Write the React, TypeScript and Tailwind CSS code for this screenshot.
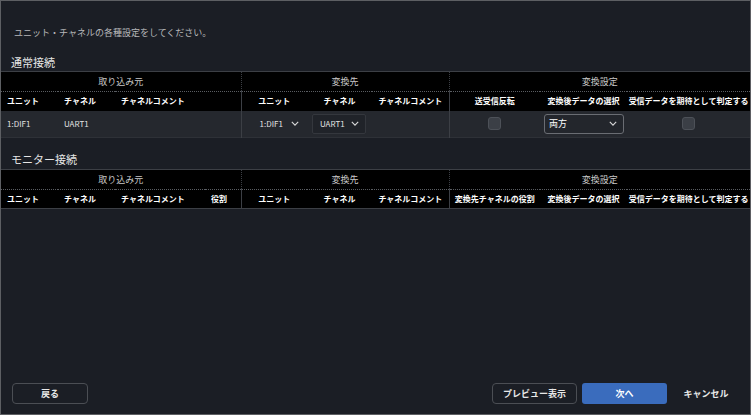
import React from "react";

const font = "font-['Noto_Sans_CJK_JP','Noto_Sans',sans-serif]";
const sep = "border-r border-[#3c3f45]";
const groupTh =
  "h-[20px] text-[9px] font-normal text-[#c9c9c9] text-center border-b border-dotted border-b-[#5a5d62]";
const colTh = "h-[19px] text-[8px] font-bold text-white whitespace-nowrap";

function Chevron({ className = "" }: { className?: string }) {
  return (
    <svg
      viewBox="0 0 10 6"
      className={"w-[8px] h-[5px] " + className}
      fill="none"
      stroke="#d8d8d8"
      strokeWidth="1.4"
    >
      <polyline points="1,1 5,5 9,1" />
    </svg>
  );
}

function Checkbox() {
  return (
    <span className="inline-block w-[13px] h-[13px] rounded-[3px] bg-[#3b3f46] border border-[#4d5158] align-middle" />
  );
}

function InlineSelect({ value, boxed }: { value: string; boxed?: boolean }) {
  return (
    <div
      className={
        "w-[54px] h-[20px] flex items-center justify-between pl-[7px] pr-[6px] rounded-[2px] " +
        (boxed ? "border border-[#34373d] bg-[#202329]" : "border border-transparent")
      }
    >
      <span className="text-[8px] text-[#e2e2e2]">{value}</span>
      <Chevron />
    </div>
  );
}

export default function App() {
  return (
    <div
      className={`${font} w-[751px] h-[415px] bg-[#1b1e25] border border-[#5d5f63] flex flex-col text-white overflow-hidden`}
    >
      <p className="mt-[25px] ml-[13px] text-[9px] leading-[13px] text-[#b7b8ba]">
        ユニット・チャネルの各種設定をしてください。
      </p>
      <h2 className="mt-[16px] ml-[10px] text-[11px] leading-[15px] text-[#e6e6e6]">
        通常接続
      </h2>

      <table className="mt-[1px] w-full table-fixed border-collapse">
        <colgroup>
          <col className="w-[57px]" />
          <col className="w-[57px]" />
          <col className="w-[126px]" />
          <col className="w-[66px]" />
          <col className="w-[65px]" />
          <col className="w-[77px]" />
          <col className="w-[91px]" />
          <col className="w-[87px]" />
          <col />
        </colgroup>
        <thead className="bg-black border-t border-[#3c3f45]">
          <tr>
            <th colSpan={3} className={`${groupTh} ${sep}`}>取り込み元</th>
            <th colSpan={3} className={`${groupTh} ${sep}`}>変換先</th>
            <th colSpan={3} className={groupTh}>変換設定</th>
          </tr>
          <tr>
            <th className={`${colTh} text-left pl-[6px]`}>ユニット</th>
            <th className={`${colTh} text-left pl-[6px]`}>チャネル</th>
            <th className={`${colTh} text-left pl-[6px] ${sep}`}>チャネルコメント</th>
            <th className={colTh}>ユニット</th>
            <th className={colTh}>チャネル</th>
            <th className={`${colTh} ${sep}`}>チャネルコメント</th>
            <th className={colTh}>送受信反転</th>
            <th className={colTh}>変換後データの選択</th>
            <th className={colTh}>受信データを期待として判定する</th>
          </tr>
        </thead>
        <tbody>
          <tr className="h-[27px] bg-[#25282e] border-b border-[#2e3137] text-[8px] text-[#e2e2e2]">
            <td className="pl-[6px]">1:DIF1</td>
            <td className="pl-[6px]">UART1</td>
            <td className={sep}></td>
            <td className="pl-[10px]">
              <InlineSelect value="1:DIF1" />
            </td>
            <td className="pl-[5px]">
              <InlineSelect value="UART1" boxed />
            </td>
            <td className={sep}></td>
            <td className="text-center">
              <Checkbox />
            </td>
            <td className="pl-[4px]">
              <div className="w-[80px] h-[20px] flex items-center justify-between pl-[4px] pr-[6px] rounded-[3px] border border-[#6a6d73] bg-[#23262c]">
                <span className="text-[9px] text-white">両方</span>
                <Chevron />
              </div>
            </td>
            <td className="text-center">
              <Checkbox />
            </td>
          </tr>
        </tbody>
      </table>

      <h2 className="mt-[14px] ml-[10px] text-[11px] leading-[15px] text-[#e6e6e6]">
        モニター接続
      </h2>

      <table className="mt-[2px] w-full table-fixed border-collapse">
        <colgroup>
          <col className="w-[57px]" />
          <col className="w-[57px]" />
          <col className="w-[90px]" />
          <col className="w-[36px]" />
          <col className="w-[66px]" />
          <col className="w-[65px]" />
          <col className="w-[77px]" />
          <col className="w-[91px]" />
          <col className="w-[87px]" />
          <col />
        </colgroup>
        <thead className="bg-black border-t border-b border-[#3c3f45]">
          <tr>
            <th colSpan={4} className={`${groupTh} ${sep}`}>取り込み元</th>
            <th colSpan={3} className={`${groupTh} ${sep}`}>変換先</th>
            <th colSpan={3} className={groupTh}>変換設定</th>
          </tr>
          <tr>
            <th className={`${colTh} text-left pl-[6px]`}>ユニット</th>
            <th className={`${colTh} text-left pl-[6px]`}>チャネル</th>
            <th className={`${colTh} text-left pl-[6px]`}>チャネルコメント</th>
            <th className={`${colTh} text-left pl-[6px] ${sep}`}>役割</th>
            <th className={colTh}>ユニット</th>
            <th className={colTh}>チャネル</th>
            <th className={`${colTh} ${sep}`}>チャネルコメント</th>
            <th className={colTh}>変換先チャネルの役割</th>
            <th className={colTh}>変換後データの選択</th>
            <th className={colTh}>受信データを期待として判定する</th>
          </tr>
        </thead>
      </table>

      <div className="mt-auto mb-[10px] flex items-center pl-[11px] pr-[8px]">
        <button className="w-[76px] h-[21px] rounded-[4px] border-[1.5px] border-[#4b4e54] text-[9px] font-bold text-[#e8e8e8]">
          戻る
        </button>
        <button className="ml-auto w-[85px] h-[21px] rounded-[4px] border-[1.5px] border-[#4b4e54] text-[9px] font-bold text-[#e8e8e8]">
          プレビュー表示
        </button>
        <button className="ml-[5px] w-[85px] h-[21px] rounded-[3px] bg-[#3a6cbd] text-[9px] font-bold text-white">
          次へ
        </button>
        <button className="ml-[3px] w-[72px] h-[21px] text-[9px] font-bold text-[#e8e8e8]">
          キャンセル
        </button>
      </div>
    </div>
  );
}
